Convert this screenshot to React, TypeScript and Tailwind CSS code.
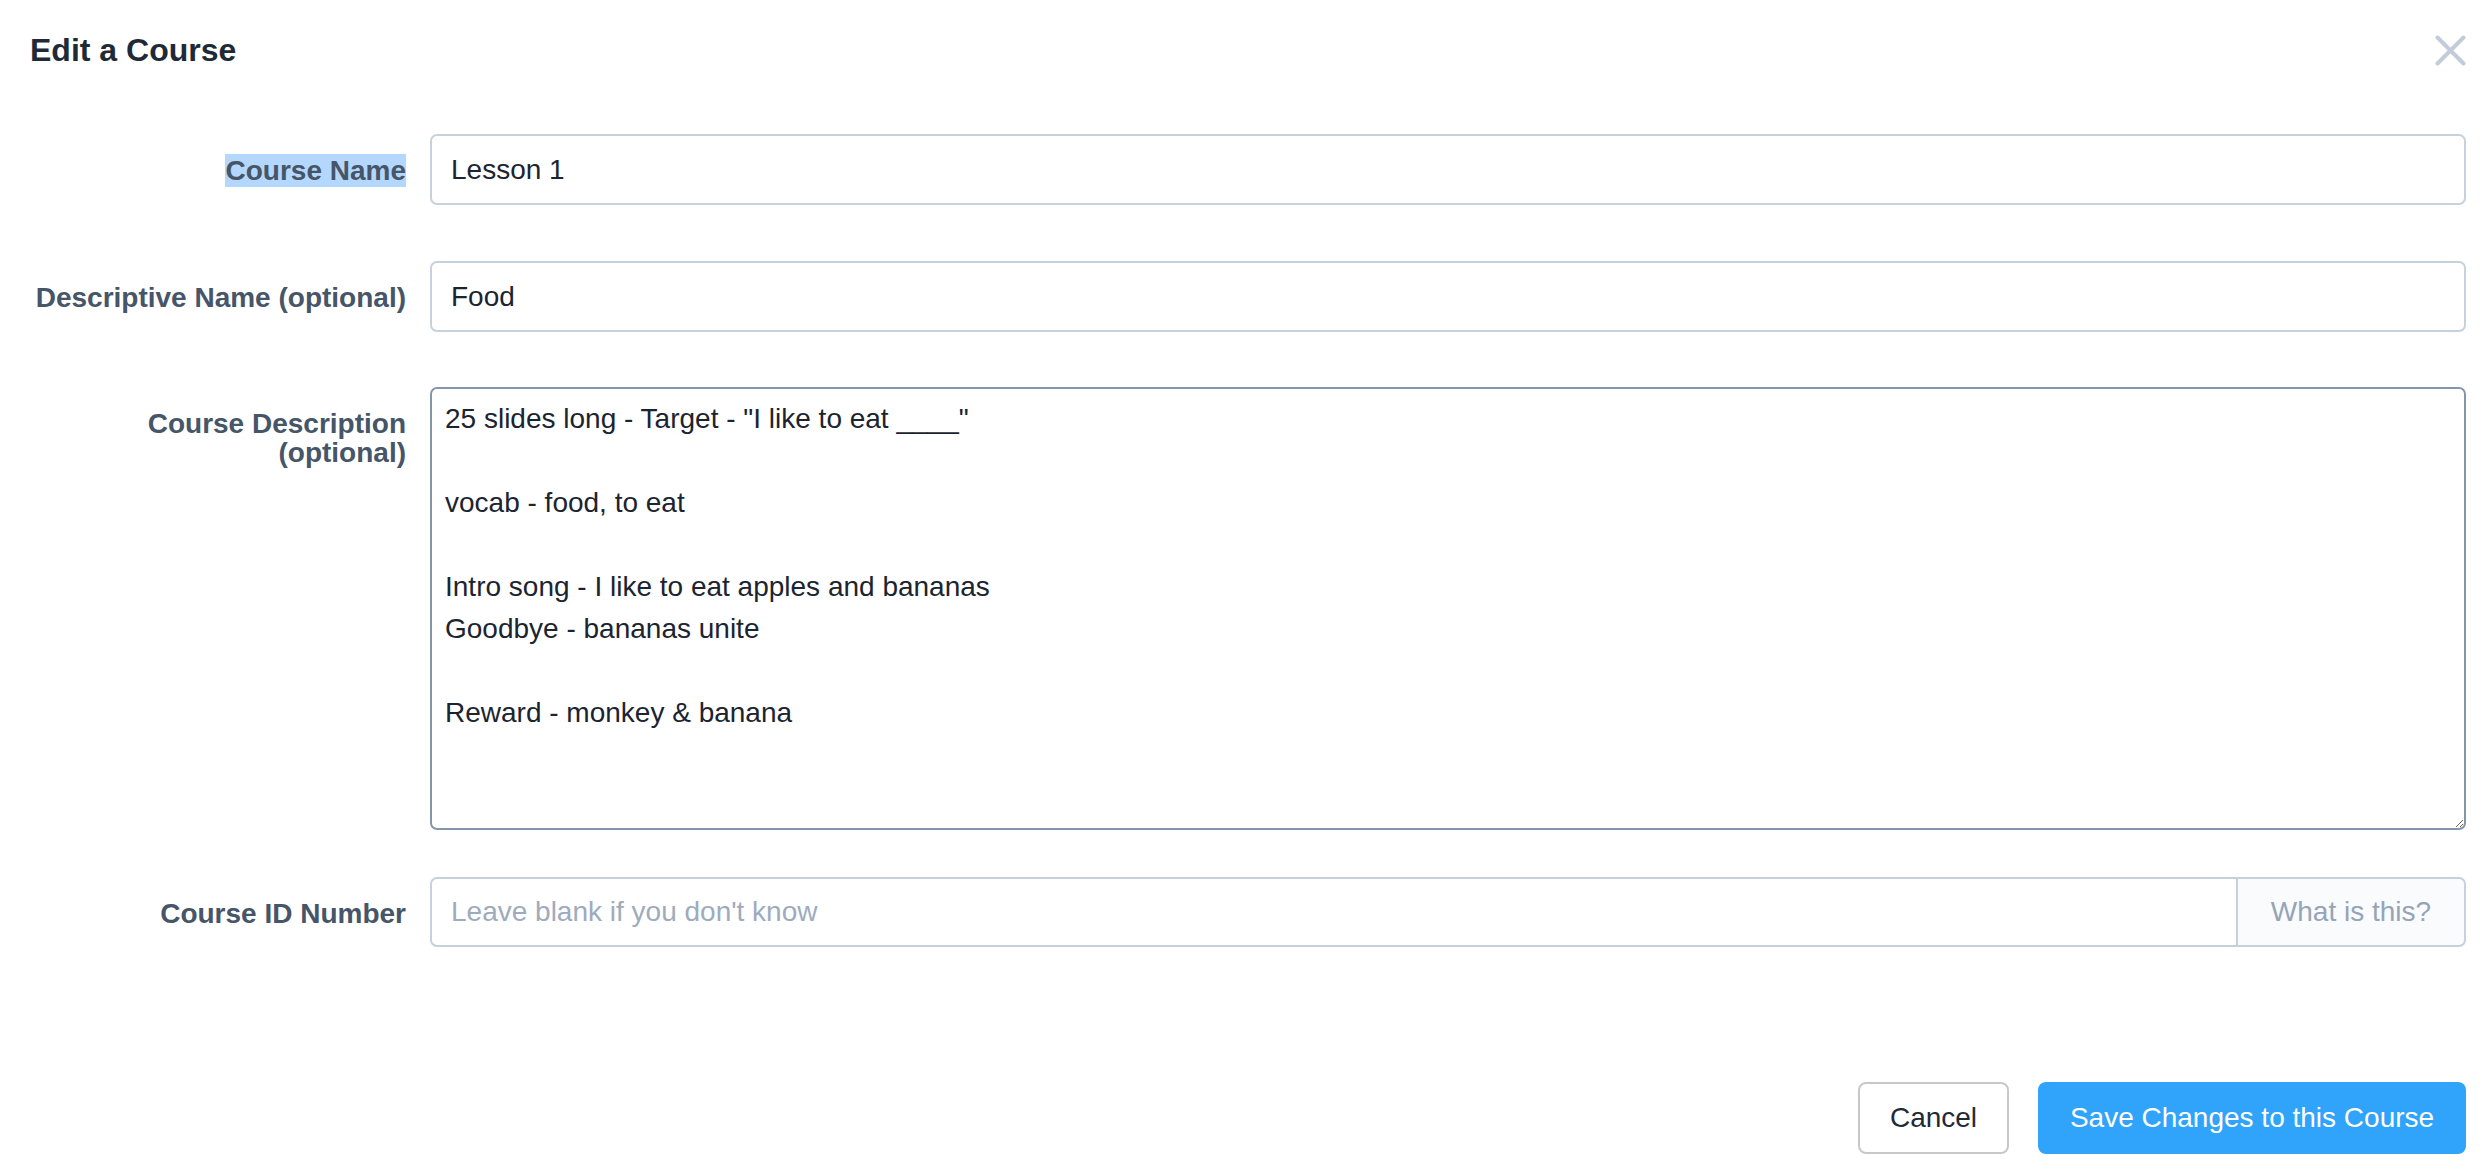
import React from "react";

const FONT = { fontFamily: '"Liberation Sans", Arial, Helvetica, sans-serif' };

const desc = `25 slides long - Target - "I like to eat ____"

vocab - food, to eat

Intro song - I like to eat apples and bananas
Goodbye - bananas unite

Reward - monkey & banana`;

function Label({ children }: { children: React.ReactNode }) {
  return (
    <div className="w-[376px] shrink-0 pt-[22px] text-right text-[28px] leading-[29px] font-bold text-[#465568]">
      {children}
    </div>
  );
}

export default function App() {
  return (
    <div
      className="w-[2484px] h-[1174px] bg-white pl-[30px] pr-[18px] pt-[30px] text-[#1e293b] overflow-hidden"
      style={FONT}
    >
      <div className="flex items-center justify-between h-[40px]">
        <h2 className="text-[32px] leading-[40px] font-bold text-[#1f2a37]">Edit a Course</h2>
        <button className="w-[31px] h-[31px] flex items-center justify-center" aria-label="Close">
          <svg width="31" height="31" viewBox="0 0 31 31" fill="none">
            <path d="M2.5 2.5 L28.5 28.5 M28.5 2.5 L2.5 28.5" stroke="#c3cdd9" strokeWidth="4" strokeLinecap="round" />
          </svg>
        </button>
      </div>

      <form className="mt-[64px] flex flex-col">
        <div className="flex gap-[24px]">
          <Label>
            <span className="bg-[#b4d7fe] py-[1px]">Course Name</span>
          </Label>
          <input
            defaultValue="Lesson 1"
            className="flex-1 h-[71px] rounded-[7px] border-2 border-[#c6d1de] bg-white px-[19px] text-[28px] text-[#1b2430] outline-none"
            style={FONT}
          />
        </div>

        <div className="flex gap-[24px] mt-[56px]">
          <Label>Descriptive Name (optional)</Label>
          <input
            defaultValue="Food"
            className="flex-1 h-[71px] rounded-[7px] border-2 border-[#c6d1de] bg-white px-[19px] text-[28px] text-[#1b2430] outline-none"
            style={FONT}
          />
        </div>

        <div className="flex gap-[24px] mt-[55px]">
          <Label>
            Course Description
            <br />
            (optional)
          </Label>
          <textarea
            defaultValue={desc}
            className="flex-1 h-[443px] rounded-[7px] border-2 border-[#8696aa] bg-white px-[13px] py-[9px] text-[28px] leading-[42px] text-[#1b2430] outline-none"
            style={FONT}
          />
        </div>

        <div className="flex gap-[24px] mt-[47px]">
          <Label>Course ID Number</Label>
          <div className="flex-1 flex h-[70px]">
            <input
              placeholder="Leave blank if you don't know"
              className="flex-1 min-w-0 h-full rounded-l-[7px] border-2 border-[#c6d1de] bg-white px-[19px] text-[28px] text-[#1b2430] outline-none placeholder:text-[#9eabbd]"
              style={FONT}
            />
            <div className="w-[228px] h-full flex items-center justify-center rounded-r-[7px] border-2 border-l-0 border-[#c6d1de] bg-[#f9fbfd] text-[28px] text-[#95a4b8]">
              What is this?
            </div>
          </div>
        </div>

        <div className="flex justify-end gap-[29px] mt-[135px]">
          <button
            type="button"
            className="h-[72px] w-[151px] rounded-[8px] border-2 border-[#c8c8c8] bg-white text-[28px] text-[#1f2a37]"
            style={FONT}
          >
            Cancel
          </button>
          <button
            type="button"
            className="h-[72px] w-[428px] rounded-[8px] bg-[#30a3fb] text-[28px] text-white"
            style={FONT}
          >
            Save Changes to this Course
          </button>
        </div>
      </form>
    </div>
  );
}
